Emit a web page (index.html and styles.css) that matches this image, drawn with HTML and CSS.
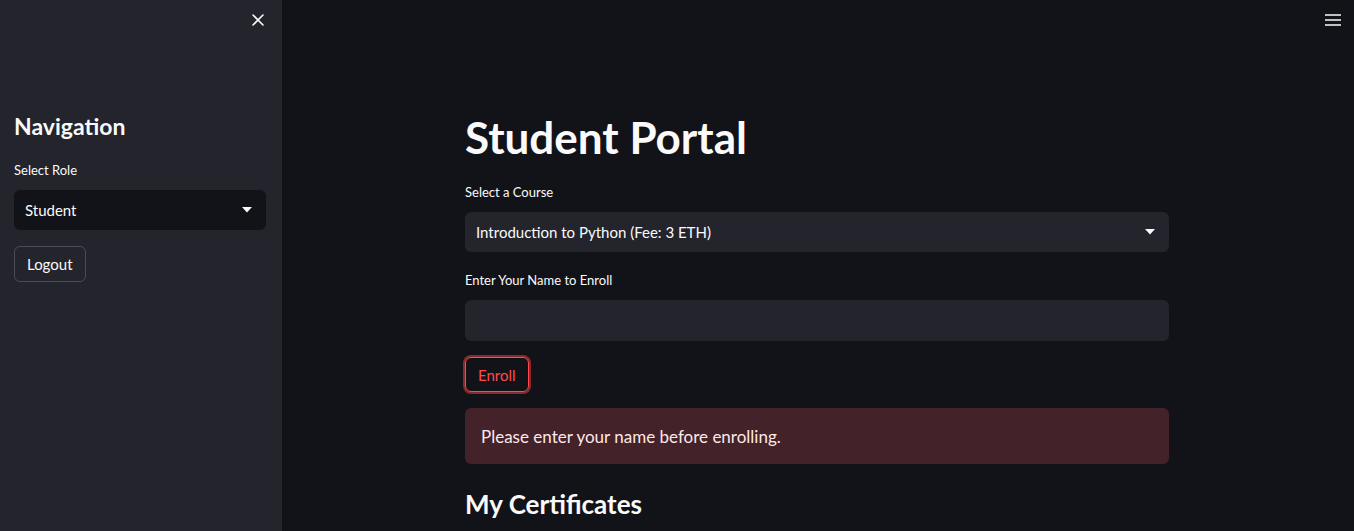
FILE: index.html
```html
<!DOCTYPE html>
<html>
<head>
<meta charset="utf-8">
<link rel="stylesheet" href="styles.css">
</head>
<body>
<div class="app">
  <aside class="sidebar">
    <div class="sidebar-top">
      <button class="icon-btn close-btn" aria-label="Close sidebar">
        <svg width="14" height="14" viewBox="0 0 14 14"><path d="M2 2 L12 12 M12 2 L2 12" stroke="#fafafa" stroke-width="1.6" stroke-linecap="round"/></svg>
      </button>
    </div>
    <div class="sidebar-body">
      <h2 class="side-title">Navigation</h2>
      <label class="label">Select Role</label>
      <div class="select dark">
        <span>Student</span>
        <svg class="caret" width="10" height="6" viewBox="0 0 10 6"><path d="M0 0 H10 L5 5.5 Z" fill="#fafafa"/></svg>
      </div>
      <button class="btn">Logout</button>
    </div>
  </aside>
  <main class="main">
    <div class="topbar">
      <button class="icon-btn menu-btn" aria-label="Menu">
        <svg width="16" height="12" viewBox="0 0 16 12"><path d="M0 1 H16 M0 6 H16 M0 11 H16" stroke="#fafafa" stroke-width="1.6"/></svg>
      </button>
    </div>
    <div class="content">
      <h1 class="title">Student Portal</h1>
      <label class="label">Select a Course</label>
      <div class="select light">
        <span>Introduction to Python (Fee: 3 ETH)</span>
        <svg class="caret" width="10" height="6" viewBox="0 0 10 6"><path d="M0 0 H10 L5 5.5 Z" fill="#fafafa"/></svg>
      </div>
      <label class="label">Enter Your Name to Enroll</label>
      <div class="input"></div>
      <button class="btn btn-focus">Enroll</button>
      <div class="alert">Please enter your name before enrolling.</div>
      <h3 class="subtitle">My Certificates</h3>
    </div>
  </main>
</div>
</body>
</html>
```
FILE: styles.css
```css
* { box-sizing: border-box; }
html, body { margin: 0; padding: 0; height: 100%; }
body {
  background: #121318;
  color: #fafafa;
  font-family: "Lato", "Noto Sans", sans-serif;
  overflow: hidden;
}
.app { display: flex; height: 531px; }
.sidebar {
  width: 282px;
  flex: none;
  background: #23242c;
  display: flex;
  flex-direction: column;
}
.sidebar-top {
  height: 40px;
  display: flex;
  justify-content: flex-end;
  align-items: center;
  padding-right: 14px;
}
.icon-btn {
  background: none;
  border: none;
  padding: 0;
  display: flex;
  align-items: center;
  justify-content: center;
  cursor: pointer;
}
.close-btn { width: 20px; height: 20px; }
.sidebar-body {
  padding: 71px 16px 0 14px;
  display: flex;
  flex-direction: column;
}
.side-title {
  margin: 0 0 20px 0;
  font-size: 23px;
  font-weight: 700;
  line-height: 30px;
}
.label {
  font-size: 13px;
  line-height: 18px;
  margin-bottom: 11px;
  display: block;
}
.select {
  height: 40px;
  border-radius: 6px;
  display: flex;
  align-items: center;
  justify-content: space-between;
  padding: 0 14px 0 11px;
  font-size: 15px;
}
.select.dark { background: #121318; margin-bottom: 16px; }
.select.light { background: #23242c; margin-bottom: 19px; }
.caret { flex: none; }
.btn {
  align-self: flex-start;
  background: transparent;
  color: #fafafa;
  border: 1px solid #4a4b54;
  border-radius: 6px;
  font-family: inherit;
  font-size: 15px;
  height: 36px;
  padding: 0 12px;
}
.main {
  flex: 1;
  display: flex;
  flex-direction: column;
  padding-right: 2px;
}
.topbar {
  height: 40px;
  display: flex;
  justify-content: flex-end;
  align-items: center;
  padding-right: 11px;
}
.menu-btn { width: 16px; height: 12px; }
.content {
  width: 704px;
  margin: 0 auto;
  display: flex;
  flex-direction: column;
  padding-top: 69px;
}
.title {
  margin: 0 0 18px 0;
  font-size: 44px;
  font-weight: 700;
  line-height: 56px;
}
.input {
  height: 41px;
  border-radius: 6px;
  background: #23242c;
  margin-bottom: 16px;
}
.btn-focus {
  color: #ff4b4b;
  border: 1px solid #ff4b4b;
  box-shadow: 0 0 0 2px rgba(220, 55, 60, 0.6);
  height: 35px;
  padding: 0 12px;
}
.alert {
  margin-top: 16px;
  height: 56px;
  border-radius: 6px;
  background: #442229;
  color: #fde8e8;
  font-size: 17px;
  display: flex;
  align-items: center;
  padding: 0 16px;
}
.subtitle {
  margin: 22px 0 0 0;
  font-size: 26px;
  font-weight: 700;
  line-height: 36px;
}
```
